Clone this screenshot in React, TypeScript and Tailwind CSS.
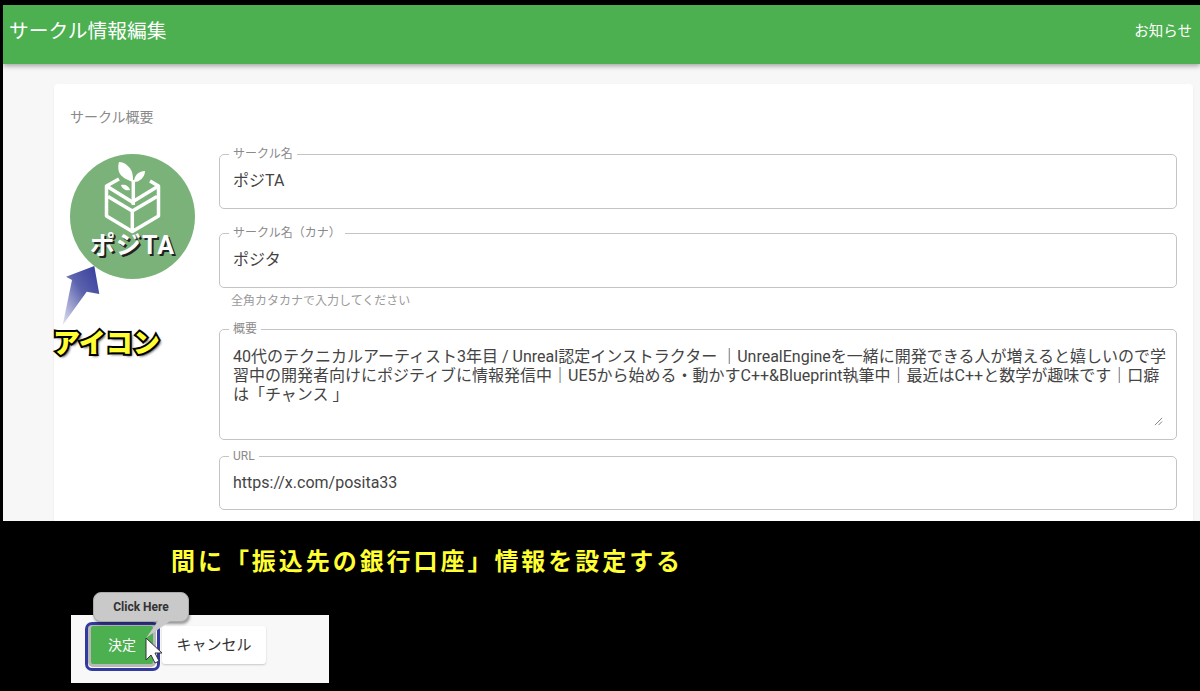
const font = {
  fontFamily: '"Roboto", "Noto Sans CJK JP", sans-serif',
};

type FieldProps = {
  label: string;
  value: string;
  className?: string;
};

const Field = ({ label, value, className }: FieldProps) => (
  <fieldset
    className={`border border-[#c4c4c4] rounded-[5px] pl-[9px] pr-3 ${className ?? ""}`}
  >
    <legend className="px-[4px] text-[12px] leading-[11px] text-[#8a8a8a]">{label}</legend>
    <div className="text-[16px] leading-[20px] text-[#444] pl-[4px] mt-[11px]">{value}</div>
  </fieldset>
);

const PositaLogo = () => (
  <div className="relative w-[125px] h-[125px] rounded-full bg-[#7bb27a]">
    <svg viewBox="0 0 125 125" className="absolute inset-0 w-full h-full" fill="none">
      <path d="M49 8c6 0 11 5 13 10 1 3 1 7 1 10-6-2-12-5-14-10-1-3-1-7 0-10Z" fill="#fff" />
      <path d="M75 17c0 6-5 11-11 11 0-6 4-11 11-11Z" fill="#fff" />
      <path d="M63.3 26v25" stroke="#fff" strokeWidth="3.5" />
      <path d="M49 25 36.5 32v30l25.8 15.5L88.5 62V32L80 27" stroke="#fff" strokeWidth="3.5" strokeLinejoin="round" />
      <path d="M36.5 32l25.8 16L88.5 32" stroke="#fff" strokeWidth="3.5" strokeLinejoin="round" />
      <path d="M38 42.5l24.3 14.5L87 42.5M62.3 57v20" stroke="#fff" strokeWidth="3.5" strokeLinejoin="round" />
      <path d="M51 31c4-1 8 1 9 5-4 1-8-1-9-5Z" fill="#fff" />
    </svg>
    <div className="absolute left-0 right-0 top-[78px] text-center text-[25px] leading-[28px] font-bold text-white tracking-[1px] whitespace-nowrap [text-shadow:2px_2px_0_#222]">
      ポジTA
    </div>
  </div>
);

export default function App() {
  return (
    <div style={font} className="relative w-[1200px] h-[691px] bg-black overflow-hidden">
      <div className="pt-[5px] pl-[3px] h-[521px] overflow-hidden">
        <div className="h-[516px] bg-[#f7f7f7] overflow-hidden">
          <header className="h-[59px] bg-[#4caf50] flex items-center justify-between pl-[6px] pr-[8px] pb-[6px] text-white shadow-[0_2px_5px_rgba(0,0,0,0.35)] relative">
            <h1 className="text-[19.75px] font-normal">サークル情報編集</h1>
            <span className="text-[14.5px]">お知らせ</span>
          </header>
          <div className="ml-[51px] mr-[7px] mt-[20px] bg-white rounded-[4px] shadow-[0_1px_2px_rgba(0,0,0,0.08)] h-[500px] pl-[16px] pr-[16px] pt-[24px]">
            <div className="text-[14px] leading-[19px] text-[#8a8a8a]">サークル概要</div>
            <div className="flex mt-[18px]">
              <div className="w-[149px] shrink-0 pt-[9px]">
                <PositaLogo />
              </div>
              <div className="flex-1 min-w-0 flex flex-col pt-[4px]">
                <Field label="サークル名" value="ポジTA" className="h-[60px]" />
                <Field label="サークル名（カナ）" value="ポジタ" className="h-[60px] mt-[19px]" />
                <div className="text-[12px] leading-[14px] text-[#9a9a9a] pl-[12px] mt-[6px]">全角カタカナで入力してください</div>
                <fieldset className="relative min-w-0 border border-[#c4c4c4] rounded-[5px] pl-[9px] pr-0 h-[116px] mt-[16px]">
                  <legend className="px-[4px] text-[12px] leading-[11px] text-[#8a8a8a]">概要</legend>
                  <p className="text-[16px] leading-[19px] text-[#444] pl-[4px] mt-[12px] w-[940px]">
                    40代のテクニカルアーティスト3年目 / Unreal認定インストラクター ｜UnrealEngineを一緒に開発できる人が増えると嬉しいので学習中の開発者向けにポジティブに情報発信中｜UE5から始める・動かすC++&amp;Blueprint執筆中｜最近はC++と数学が趣味です｜口癖は「チャンス 」
                  </p>
                  <svg viewBox="0 0 10 10" className="absolute right-[13px] top-[82px] w-[9px] h-[9px]" stroke="#777" strokeWidth="1">
                    <path d="M1 9 9 1M5 9l4-4" />
                  </svg>
                </fieldset>
                <Field label="URL" value="https://x.com/posita33" className="h-[59px] mt-[11px]" />
              </div>
            </div>
          </div>
        </div>
      </div>

      <div className="pl-[171px] pt-[26px] text-[24px] leading-[30px] font-bold text-[#ffff33] tracking-[2.95px] whitespace-nowrap">
        間に「振込先の銀行口座」情報を設定する
      </div>

      <div className="ml-[71px] mt-[38px] w-[258px] h-[68px] bg-[#f8f8f8] flex items-start gap-[9px] pl-[20px] pt-[11px]">
        <button className="w-[62px] h-[38px] bg-[#4caf50] text-white text-[14px] rounded-[2px] shadow-[0_0_0_3px_#b8b8b8]">決定</button>
        <button className="w-[104px] h-[38px] bg-white text-[#333] text-[15px] rounded-[3px] shadow-[0_1px_2px_rgba(0,0,0,0.2)]">キャンセル</button>
      </div>

      {/* annotations drawn over the screenshot */}
      <svg viewBox="0 0 60 70" className="absolute left-[60px] top-[264px] w-[60px] h-[70px]">
        <defs>
          <linearGradient id="arrowFill" x1="1" y1="0" x2="0" y2="1">
            <stop offset="0" stopColor="#333b9c" />
            <stop offset="0.45" stopColor="#5b62ad" />
            <stop offset="1" stopColor="#e4e5f2" />
          </linearGradient>
        </defs>
        <path d="M34.3 2 6 12.7l6 3.3L2.7 61l24-33.3L39.3 30Z" fill="url(#arrowFill)" />
      </svg>
      <div className="absolute left-[53px] top-[328px] text-[27px] leading-[32px] font-black text-[#ffff33] whitespace-nowrap [-webkit-text-stroke:4px_#000] [paint-order:stroke_fill] [text-shadow:2px_2px_3px_#000]">
        アイコン
      </div>

      <div className="absolute left-[85px] top-[622px] w-[75px] h-[49px] rounded-[7px] border-[3px] border-[#333a9e]" />
      <div className="absolute left-[93px] top-[592px] w-[96px] h-[30px] rounded-[8px] bg-[#c9c9c9] border border-[#aaa] shadow-[1px_2px_3px_rgba(0,0,0,0.4)] flex items-center justify-center text-[12px] font-bold text-[#333]">
        Click Here
      </div>
      <svg viewBox="0 0 40 44" className="absolute left-[140px] top-[621px] w-[40px] h-[44px]">
        <path d="M18 0h12L6 17Z" fill="#c9c9c9" />
        <path d="M6 17v22l5-5 4 8 4-2-4-8h7Z" fill="#fff" stroke="#333" strokeWidth="1" strokeLinejoin="round" />
      </svg>
    </div>
  );
}
